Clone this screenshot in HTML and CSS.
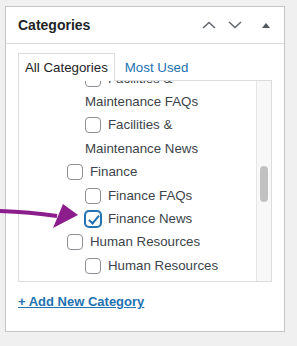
FILE: index.html
```html
<!DOCTYPE html>
<html lang="en">

<head>
    <meta charset="UTF-8">
    <meta name="viewport" content="width=device-width, initial-scale=1.0">
    <title>Categories</title>

    <link rel="stylesheet" href="styles.css">
</head>

<body>
    <div class="postbox">
        <div class="postbox-header">
            <h2>Categories</h2>
            <button class="handle" type="button" aria-label="Move up">
                <svg width="14" height="8" viewBox="0 0 14 8"><polyline points="1,7 7,1.5 13,7" /></svg>
            </button>
            <button class="handle" type="button" aria-label="Move down">
                <svg width="14" height="8" viewBox="0 0 14 8"><polyline points="1,1 7,6.5 13,1" /></svg>
            </button>
            <button class="toggle" type="button" aria-label="Toggle panel">
                <svg width="8" height="5" viewBox="0 0 8 5"><polygon points="0,5 4,0 8,5" /></svg>
            </button>
        </div>

        <div class="inside">
            <ul class="tabs">
                <li class="active"><a href="#">All Categories</a></li>
                <li><a href="#">Most Used</a></li>
            </ul>

            <div class="tabs-panel">
                <div class="scroll-area">
                    <!-- list is scrolled part way down -->
                    <ul class="checklist">
                        <li>
                            <label><input type="checkbox">Facilities</label>
                            <ul class="children">
                                <li><label><input type="checkbox">Facilities &amp; Maintenance FAQs</label></li>
                                <li><label><input type="checkbox">Facilities &amp; Maintenance News</label></li>
                            </ul>
                        </li>
                        <li>
                            <label><input type="checkbox">Finance</label>
                            <ul class="children">
                                <li><label><input type="checkbox">Finance FAQs</label></li>
                                <li><label><input type="checkbox" class="focus" checked>Finance News</label></li>
                            </ul>
                        </li>
                        <li>
                            <label><input type="checkbox">Human Resources</label>
                            <ul class="children">
                                <li><label><input type="checkbox">Human Resources</label></li>
                            </ul>
                        </li>
                    </ul>
                </div>
                <div class="scrollbar">
                    <div class="thumb"></div>
                </div>
            </div>

            <a class="add-new" href="#">+ Add New Category</a>
        </div>
    </div>

    <!-- annotation arrow -->
    <svg class="arrow" width="80" height="32" viewBox="0 0 80 32">
        <path d="M0 11 Q30 12 57 16" />
        <polygon points="63,4 78,15 53,28" />
    </svg>
</body>

</html>
```

FILE: styles.css
```css
* {
    box-sizing: border-box;
}

body {
    margin: 0;
    background: #f0f0f1;
    font-family: "Liberation Sans", Arial, sans-serif;
    color: #3c434a;
}

.postbox {
    margin: 6px 0 0 5px;
    width: 280px;
    background: #fff;
    border: 1px solid #c3c4c7;
}

.postbox-header {
    display: flex;
    align-items: center;
    height: 37px;
    padding-left: 12px;
    border-bottom: 1px solid #dcdcde;
}

.postbox-header h2 {
    margin: 0 auto 0 0;
    font-size: 14px;
    font-weight: bold;
    color: #1d2327;
}

.handle,
.toggle {
    display: flex;
    align-items: center;
    justify-content: center;
    height: 36px;
    width: 26px;
    padding: 0;
    border: 0;
    background: none;
}

.toggle {
    width: 36px;
}

.handle svg polyline {
    fill: none;
    stroke: #646970;
    stroke-width: 1.6;
}

.toggle svg polygon {
    fill: #50575e;
}

.inside {
    padding: 9px 12px 19px;
}

/* tabs */
.tabs {
    display: flex;
    margin: 0 0 -1px;
    padding: 0;
    list-style: none;
    font-size: 13.3px;
}

.tabs li {
    position: relative;
    border: 1px solid transparent;
    border-bottom: 0;
    line-height: 27px;
    padding: 0 6px;
}

.tabs li+li {
    margin-left: 3px;
}

.tabs li.active {
    border-color: #dcdcde;
    background: #fff;
    height: 28px;
}

.tabs a {
    color: #2271b1;
    text-decoration: none;
}

.tabs .active a {
    color: #1d2327;
}

.tabs-panel {
    display: flex;
    height: 202px;
    border: 1px solid #dcdcde;
}

.scroll-area {
    flex: 1;
    overflow: hidden;
}

.scrollbar {
    width: 15px;
    background: #f8f8f8;
    border-left: 1px solid #e6e6e6;
    padding: 85px 0 0 3px;
}

.thumb {
    width: 8px;
    height: 36px;
    border-radius: 4px;
    background: #c1c1c1;
}

/* category checklist */
.checklist,
.children {
    list-style: none;
    margin: 0;
    padding: 0;
}

.checklist {
    margin-top: -37.8px;
    padding-left: 48px;
}

.children {
    padding-left: 18px;
}

.checklist li {
    font-size: 13.3px;
    line-height: 23.4px;
}

.checklist label {
    display: block;
    padding-right: 4px;
}

.checklist input[type="checkbox"] {
    appearance: none;
    position: relative;
    width: 16px;
    height: 16px;
    margin: 0 7px 0 0;
    vertical-align: -4px;
    border: 1px solid #8c8f94;
    border-radius: 4px;
    background: #fff;
}

.checklist input[type="checkbox"].focus {
    border-color: #2271b1;
    box-shadow: 0 0 0 1px #2271b1;
}

.checklist input[type="checkbox"]:checked::before {
    content: "";
    position: absolute;
    left: 4.5px;
    top: 1px;
    width: 4px;
    height: 9px;
    border-right: 2px solid #2271b1;
    border-bottom: 2px solid #2271b1;
    transform: rotate(40deg);
}

.add-new {
    display: inline-block;
    margin-top: 10px;
    line-height: 20px;
    font-size: 13px;
    font-weight: bold;
    color: #2271b1;
    text-decoration: underline;
}

/* arrow sits over the panel */
.arrow {
    position: absolute;
    left: 0;
    top: 200px;
}

.arrow path {
    fill: none;
    stroke: #8c1d8c;
    stroke-width: 4;
}

.arrow polygon {
    fill: #8c1d8c;
}
```
